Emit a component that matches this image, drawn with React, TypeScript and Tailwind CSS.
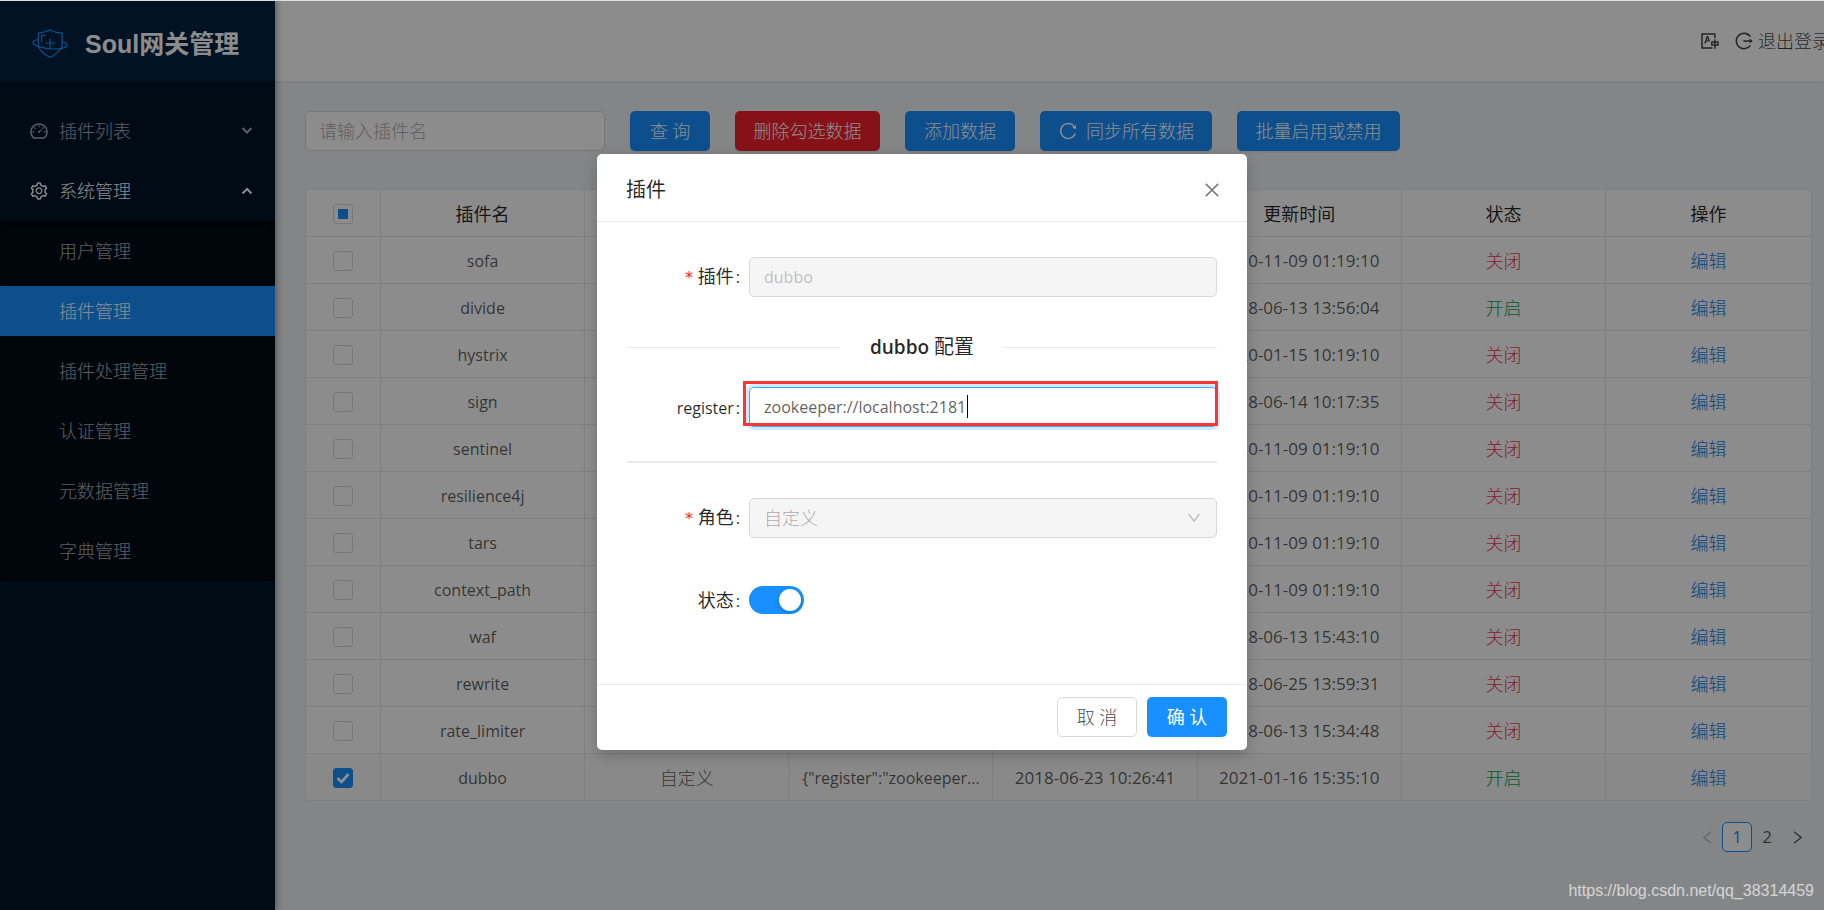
import {
  AiOutlineClose,
  AiOutlineDashboard,
  AiOutlineDown,
  AiOutlineLeft,
  AiOutlineLogout,
  AiOutlineReload,
  AiOutlineRight,
  AiOutlineSetting,
  AiOutlineTranslation,
} from "react-icons/ai";

const subMenu = ["用户管理", "插件管理", "插件处理管理", "认证管理", "元数据管理", "字典管理"];

const columns = ["插件名", "角色", "配置", "创建时间", "更新时间", "状态", "操作"];

const rows = [
  { name: "sofa", role: "自定义", config: "", created: "2020-11-09 01:19:10", updated: "2020-11-09 01:19:10", open: false },
  { name: "divide", role: "系统", config: "", created: "2018-06-25 10:19:10", updated: "2018-06-13 13:56:04", open: true },
  { name: "hystrix", role: "系统", config: "", created: "2020-01-15 10:19:10", updated: "2020-01-15 10:19:10", open: false },
  { name: "sign", role: "自定义", config: "", created: "2018-06-14 10:17:35", updated: "2018-06-14 10:17:35", open: false },
  { name: "sentinel", role: "自定义", config: "", created: "2020-11-09 01:19:10", updated: "2020-11-09 01:19:10", open: false },
  { name: "resilience4j", role: "自定义", config: "", created: "2020-11-09 01:19:10", updated: "2020-11-09 01:19:10", open: false },
  { name: "tars", role: "自定义", config: "", created: "2020-11-09 01:19:10", updated: "2020-11-09 01:19:10", open: false },
  { name: "context_path", role: "自定义", config: "", created: "2020-11-09 01:19:10", updated: "2020-11-09 01:19:10", open: false },
  { name: "waf", role: "系统", config: "", created: "2018-06-23 10:26:30", updated: "2018-06-13 15:43:10", open: false },
  { name: "rewrite", role: "系统", config: "", created: "2018-06-23 10:26:34", updated: "2018-06-25 13:59:31", open: false },
  { name: "rate_limiter", role: "系统", config: "", created: "2018-06-23 10:26:37", updated: "2018-06-13 15:34:48", open: false },
  { name: "dubbo", role: "自定义", config: '{"register":"zookeeper...', created: "2018-06-23 10:26:41", updated: "2021-01-16 15:35:10", open: true },
];

function Logo() {
  return (
    <svg className="h-9 w-9 shrink-0" viewBox="0 0 36 36" fill="none" stroke="#1890ff" strokeWidth="1.2">
      <path d="M6.500 9V7.200C11 6.500 15 5.500 18 4c3.500 1.800 7.500 2.700 12 3.200v11.300c0 2.500-.5 4-1.500 5.500" />
      <path d="M6.500 9v9c0 6 4.500 10 11.500 13.500 4.500-2.200 8-5 10-8" />
      <path d="M9.500 16V9.500H14" />
      <path d="M18 12.500v10M13.500 17h9.500" />
      <path d="M6.500 13.500C2.500 14 .8 15.200 1 16.500c.8 3.700 12 6.500 22 6.500 8 0 12.500-1.500 12-4-.4-1.500-2.500-2.700-5-3.300" />
    </svg>
  );
}

function Sider() {
  return (
    <aside className="relative z-10 w-[275px] shrink-0 bg-[#001529] shadow-[2px_0_6px_rgba(0,21,41,0.35)]">
      <div className="flex h-20 items-center bg-[#002140] pl-8 pt-[6px]">
        <Logo />
        <h1 className="ml-[17px] font-['Liberation_Sans','Noto_Sans_CJK_SC',sans-serif] text-[25px] font-bold text-white">Soul网关管理</h1>
      </div>
      <nav className="pt-5 text-white/65">
        <button className="my-[5px] flex h-[50px] w-full items-center pl-[29px] pr-[22px]">
          <AiOutlineDashboard className="h-5 w-5" />
          <span className="ml-[10px]">插件列表</span>
          <svg className="ml-auto h-3 w-3" viewBox="0 0 12 12" fill="none" stroke="currentColor" strokeWidth="2"><path d="M1.500 3l4.500 4.500L10.500 3" /></svg>
        </button>
        <button className="mt-[10px] flex h-[50px] w-full items-center pl-[29px] pr-[22px] text-white">
          <AiOutlineSetting className="h-5 w-5" />
          <span className="ml-[10px]">系统管理</span>
          <svg className="ml-auto h-3 w-3" viewBox="0 0 12 12" fill="none" stroke="currentColor" strokeWidth="2"><path d="M1.500 8.500L6 4l4.500 4.500" /></svg>
        </button>
        <ul className="mt-[5px] flex flex-col gap-[10px] bg-[#000c17] py-[5px] shadow-[inset_0_2px_8px_rgba(0,0,0,0.45)]">
          {subMenu.map((item) => (
            <li key={item}>
              <a href="#" className={item === "插件管理" ? "flex h-[50px] items-center bg-[#1890ff] pl-[59px] text-white" : "flex h-[50px] items-center pl-[59px]"}>{item}</a>
            </li>
          ))}
        </ul>
      </nav>
    </aside>
  );
}

function Toolbar() {
  const button = "flex h-10 items-center justify-center rounded-[5px] text-white shadow-[0_2px_0_rgba(0,0,0,0.045)]";
  return (
    <div className="flex gap-[25px]">
      <input aria-label="插件名" placeholder="请输入插件名" className="h-10 w-[300px] rounded-[5px] border border-[#d9d9d9] bg-white px-[13px] placeholder:text-[#b0b0b0]" />
      <button className={`${button} w-20 bg-[#1890ff]`}>查 询</button>
      <button className={`${button} w-[145px] bg-[#f5222d]`}>删除勾选数据</button>
      <button className={`${button} w-[110px] bg-[#1890ff]`}>添加数据</button>
      <button className={`${button} w-[172px] gap-2 bg-[#1890ff]`}>
        <AiOutlineReload className="h-5 w-5" />
        同步所有数据
      </button>
      <button className={`${button} w-[163px] bg-[#1890ff]`}>批量启用或禁用</button>
    </div>
  );
}

function RowCheck({ label, state }: { label: string; state: "off" | "on" | "some" }) {
  return (
    <span className="relative mx-auto block h-5 w-5">
      <input
        type="checkbox"
        aria-label={label}
        defaultChecked={state === "on"}
        className="block h-5 w-5 appearance-none rounded-[3px] border border-[#d9d9d9] bg-white checked:border-[#1890ff] checked:bg-[#1890ff]"
      />
      {state === "some" && <span className="pointer-events-none absolute inset-[5px] bg-[#1890ff]"></span>}
      {state === "on" && (
        <svg className="pointer-events-none absolute inset-0" viewBox="0 0 20 20" fill="none" stroke="#fff" strokeWidth="2.800"><path d="M4.500 10l4 4 7-8" /></svg>
      )}
    </span>
  );
}

function PluginTable() {
  const cell = "truncate border-b border-r border-[#e8e8e8] px-[10px] pt-[2px] text-center";
  return (
    <table className="mt-[38px] w-full table-fixed border-separate border-spacing-0 rounded-[5px] border-l border-t border-[#e8e8e8] bg-white text-[17px] font-normal text-black/65">
      <thead>
        <tr className="h-[47px] text-black/85">
          <th className={`${cell} w-[75px]`}><RowCheck label="全选" state="some" /></th>
          {columns.map((c) => (
            <th key={c} className={c === "操作" ? `${cell} w-[206px] text-lg font-normal` : `${cell} text-lg font-normal`}>{c}</th>
          ))}
        </tr>
      </thead>
      <tbody>
        {rows.map((r) => (
          <tr key={r.name} className={r.name === "dubbo" ? "h-[47px] bg-[#fafafa]" : "h-[47px]"}>
            <td className={cell}><RowCheck label={r.name} state={r.name === "dubbo" ? "on" : "off"} /></td>
            <td className={`${cell} text-base`}>{r.name}</td>
            <td className={`${cell} text-lg font-light`}>{r.role}</td>
            <td className={`${cell} text-base`}>{r.config}</td>
            <td className={cell}>{r.created}</td>
            <td className={cell}>{r.updated}</td>
            <td className={r.open ? `${cell} text-lg font-light text-[#00ad5c]` : `${cell} text-lg font-light text-[#f0384e]`}>{r.open ? "开启" : "关闭"}</td>
            <td className={cell}><a href="#" className="text-lg font-light text-[#1a7de9]">编辑</a></td>
          </tr>
        ))}
      </tbody>
    </table>
  );
}

function Pagination() {
  return (
    <nav aria-label="分页" className="mt-[21px] flex justify-end text-[17px] font-normal text-black/65">
      <button aria-label="上一页" className="flex h-[30px] w-[30px] items-center justify-center text-black/25"><AiOutlineLeft className="h-[17px] w-[17px]" /></button>
      <button className="flex h-[30px] w-[30px] items-center justify-center rounded-[5px] border border-[#1890ff] bg-white text-[#1890ff]">1</button>
      <button className="flex h-[30px] w-[30px] items-center justify-center">2</button>
      <button aria-label="下一页" className="flex h-[30px] w-[30px] items-center justify-center"><AiOutlineRight className="h-[17px] w-[17px]" /></button>
    </nav>
  );
}

function Label({ id, text, required }: { id: string; text: string; required?: boolean }) {
  return (
    <label htmlFor={id} className="w-[122px] shrink-0 pr-[9px] text-right font-normal text-black/85">
      {required && <span className="mr-1 font-['DejaVu_Sans_Mono',monospace] text-base text-[#f5222d]">*</span>}
      <span className={id === "register" ? "text-base" : ""}>{text}</span>
      <span className="ml-[2px] text-base">:</span>
    </label>
  );
}

function PluginModal() {
  const field = "block h-10 w-full rounded-[5px] border px-[14px]";
  return (
    <div role="dialog" aria-labelledby="title" className="w-[650px] rounded-[5px] bg-white shadow-[0_5px_15px_rgba(0,0,0,0.2)]">
      <div className="flex h-[68px] items-center justify-between border-b border-[#e8e8e8] pl-[29px] pr-[25px] pt-1">
        <h2 id="title" className="text-xl font-normal text-black/85">插件</h2>
        <button aria-label="关闭" className="text-black/50"><AiOutlineClose className="h-5 w-5" /></button>
      </div>
      <form className="px-[30px] pb-[70px] pt-[35px]">
        <div className="flex items-center">
          <Label id="plugin" text="插件" required />
          <input id="plugin" disabled defaultValue="dubbo" className={`${field} border-[#d9d9d9] bg-[#f5f5f5] text-base font-normal text-black/25`} />
        </div>
        <div className="mt-[35px] flex h-[30px] items-center gap-[30px] text-black/85">
          <span className="h-px flex-1 bg-[#e8e8e8]"></span>
          <span className="text-[19px] font-semibold">dubbo <span className="text-xl font-normal">配置</span></span>
          <span className="h-px flex-1 bg-[#e8e8e8]"></span>
        </div>
        <div className="mt-[25px] flex items-center">
          <Label id="register" text="register" />
          <div className="relative flex-1">
            <input id="register" defaultValue="zookeeper://localhost:2181" className={`${field} border-[#40a9ff] text-base font-normal text-black/65 shadow-[0_0_0_3px_rgba(24,144,255,0.2)] outline-none`} />
            <span className="absolute left-[218px] top-2 h-[23px] w-px bg-black"></span>
            <span className="pointer-events-none absolute -left-[6px] -right-px -top-[6px] bottom-px border-[3px] border-[#fa3535]"></span>
          </div>
        </div>
        <hr className="mb-[35px] mt-[34px] border-t-2 border-[#e8e8e8]" />
        <div className="flex items-center">
          <Label id="role" text="角色" required />
          <div className="relative flex-1">
            <select id="role" disabled className={`${field} appearance-none border-[#d9d9d9] bg-[#f5f5f5] text-black/35 opacity-100`}>
              <option>自定义</option>
            </select>
            <AiOutlineDown className="pointer-events-none absolute right-[15px] top-3 h-4 w-4 text-black/25" />
          </div>
        </div>
        <div className="mt-12 flex h-7 items-center">
          <Label id="status" text="状态" />
          <span className="relative block h-7 w-[55px]">
            <input id="status" type="checkbox" role="switch" defaultChecked className="block h-7 w-full appearance-none rounded-full bg-black/25 checked:bg-[#1890ff]" />
            <span className="pointer-events-none absolute right-[3px] top-[3px] h-[22px] w-[22px] rounded-full bg-white shadow-[0_2px_4px_rgba(0,35,11,0.2)]"></span>
          </span>
        </div>
      </form>
      <div className="flex justify-end gap-[10px] border-t border-[#e8e8e8] px-5 pb-[13px] pt-3">
        <button className="h-10 w-20 rounded-[5px] border border-[#d9d9d9] text-black/75">取 消</button>
        <button className="h-10 w-20 rounded-[5px] bg-[#1890ff] font-normal text-white shadow-[0_2px_0_rgba(0,0,0,0.045)]">确 认</button>
      </div>
    </div>
  );
}

export default function App() {
  return (
    <div className="relative flex min-h-screen flex-col overflow-hidden border-t border-[#d9dddc] font-['Open_Sans','Noto_Sans_CJK_SC',sans-serif] text-lg font-light leading-6">
      <div className="flex flex-1">
        <Sider />
        <div className="min-w-0 flex-1 bg-[#f0f2f5]">
          <header className="flex h-20 items-center justify-end bg-white text-black/75 shadow-[0_1px_4px_rgba(0,21,41,0.08)]">
            <button aria-label="语言" className="mr-[14px]"><AiOutlineTranslation className="h-5 w-5" /></button>
            <button className="-mr-[6px] flex items-center gap-1 whitespace-nowrap"><AiOutlineLogout className="h-5 w-5" />退出登录</button>
          </header>
          <main className="pb-10 pl-[30px] pr-3 pt-[30px]">
            <Toolbar />
            <PluginTable />
            <Pagination />
          </main>
        </div>
      </div>
      <div className="absolute inset-0 z-20 flex items-start justify-center bg-black/45 pl-5 pt-[153px]">
        <PluginModal />
      </div>
      <span className="absolute bottom-[7px] right-[10px] z-30 font-['Liberation_Sans',sans-serif] text-base font-normal text-white/65">https://blog.csdn.net/qq_38314459</span>
    </div>
  );
}
